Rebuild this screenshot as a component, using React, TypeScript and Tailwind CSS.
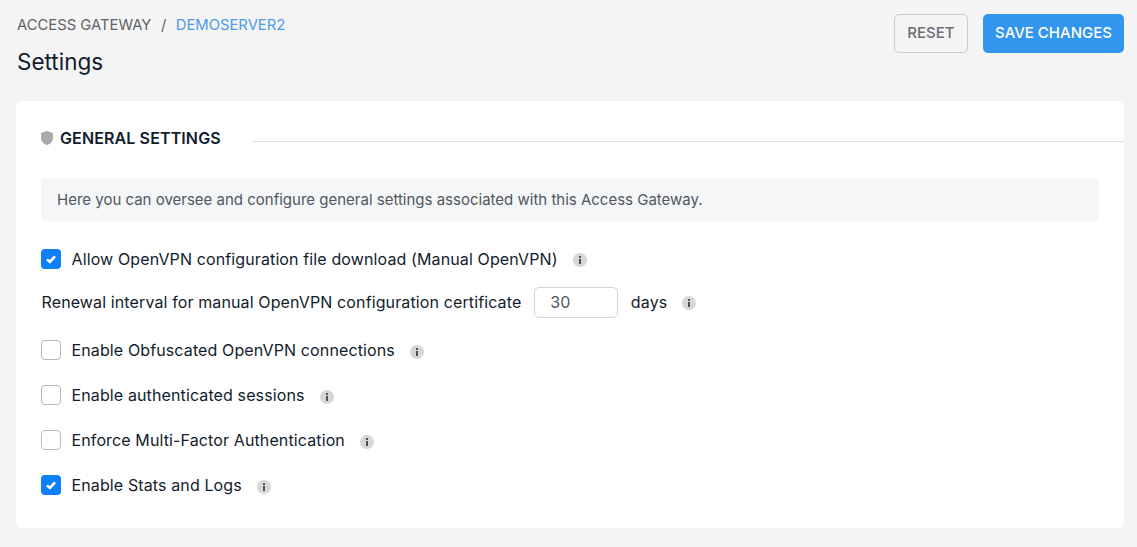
// Access gateway settings page

const Shield = () => (
    <svg viewBox="0 0 24 24" className="w-[12px] h-[14px] shrink-0" fill="#a8aaad" preserveAspectRatio="none">
        <path d="M12 0 L24 3.5 V12 C24 18 19 22 12 24 C5 22 0 18 0 12 V3.5 Z" />
    </svg>
)

const InfoDot = ({ className = '' }: { className?: string }) => (
    <span className={`w-[14px] h-[14px] rounded-full bg-[#d6d7d9] shrink-0 flex flex-col items-center justify-center gap-[1px] ${className}`}>
        <span className="w-[2px] h-[2px] bg-[#4b5058]" />
        <span className="w-[2px] h-[5px] bg-[#4b5058]" />
    </span>
)

const CheckRow = ({ label, checked, gap }: { label: string, checked?: boolean, gap: string }) => (
    <label className="flex items-center h-[20px]">
        {checked ? (
            <span className="w-[20px] h-[20px] rounded-[4px] bg-[#0d7ffb] flex items-center justify-center shrink-0">
                <svg viewBox="0 0 12 12" className="w-[12px] h-[12px]" fill="none" stroke="#fff" strokeWidth="2.6">
                    <path d="M2 6.4 L4.9 9 L10 3.4" />
                </svg>
            </span>
        ) : (
            <span className="w-[20px] h-[20px] rounded-[4px] bg-white border border-[#b5b7ba] shrink-0" />
        )}
        <span className="ml-[10.5px] text-[16px] leading-[20px] tracking-[0.12px] text-[#111c2d]">{label}</span>
        <InfoDot className={gap} />
    </label>
)

export default function App() {
    return (
        <div className="min-h-[547px] bg-[#f4f4f5] pl-[16px] pr-[13px] pt-[14px] pb-[19px] font-['Inter',sans-serif]">
            <div className="flex justify-between items-start h-[87px]">
                <div className="pl-[1px]">
                    <div className="flex items-center mt-[2px] text-[14.8px] leading-[18px] text-[#5f6268]">
                        <span>ACCESS GATEWAY</span>
                        <span className="mx-[9.5px]">/</span>
                        <span className="text-[#4d9be8]">DEMOSERVER2</span>
                    </div>
                    <h1 className="mt-[14px] text-[22.5px] leading-[28px] text-[#111c2d] font-normal">Settings</h1>
                </div>
                <div className="flex gap-[15px]">
                    <button className="w-[74px] h-[39px] pb-[1px] rounded-[5px] border border-[#c8cacd] text-[15px] font-medium text-[#6b6e73]">RESET</button>
                    <button className="w-[141px] h-[39px] pb-[1px] rounded-[5px] bg-[#3295ee] text-[15px] font-medium text-white">SAVE CHANGES</button>
                </div>
            </div>

            <div className="h-[427px] bg-white rounded-[6px] pt-[27px]">
                <div className="flex items-center h-[20px] pl-[25px]">
                    <Shield />
                    <h2 className="ml-[7px] text-[16px] leading-[20px] tracking-[0.12px] font-semibold text-[#111c2d]">GENERAL SETTINGS</h2>
                    <div className="ml-[31px] flex-1 h-px bg-[#dcdde0] mt-[6px]" />
                </div>

                <div className="px-[25px] pt-[30px]">
                    <div className="h-[43px] rounded-[4px] bg-[#f5f6f7] flex items-center pl-[16px] pt-[1px] text-[15px] text-[#4f5761]">
                        Here you can oversee and configure general settings associated with this Access Gateway.
                    </div>

                    <div className="mt-[28px]">
                        <CheckRow checked label="Allow OpenVPN configuration file download (Manual OpenVPN)" gap="ml-[15px] mt-[2px]" />
                    </div>

                    <div className="mt-[18px] h-[30px] flex items-center text-[16px] tracking-[0.12px] text-[#111c2d]">
                        <span className="ml-[0.5px]">Renewal interval for manual OpenVPN configuration certificate</span>
                        <input
                            readOnly
                            value="30"
                            className="ml-[12.5px] w-[84px] h-[31px] rounded-[5px] border border-[#d3d5d8] bg-white pl-[15.5px] text-[16px] text-[#4f5761] outline-none"
                        />
                        <span className="ml-[13px]">days</span>
                        <InfoDot className="ml-[15px] mt-[2px]" />
                    </div>

                    <div className="mt-[23px] flex flex-col gap-[25px]">
                        <CheckRow label="Enable Obfuscated OpenVPN connections" gap="ml-[15px] mt-[3px]" />
                        <CheckRow label="Enable authenticated sessions" gap="ml-[15px] mt-[3px]" />
                        <CheckRow label="Enforce Multi-Factor Authentication" gap="ml-[15px] mt-[3px]" />
                        <CheckRow checked label="Enable Stats and Logs" gap="ml-[15px] mt-[3px]" />
                    </div>
                </div>
            </div>
        </div>
    )
}
